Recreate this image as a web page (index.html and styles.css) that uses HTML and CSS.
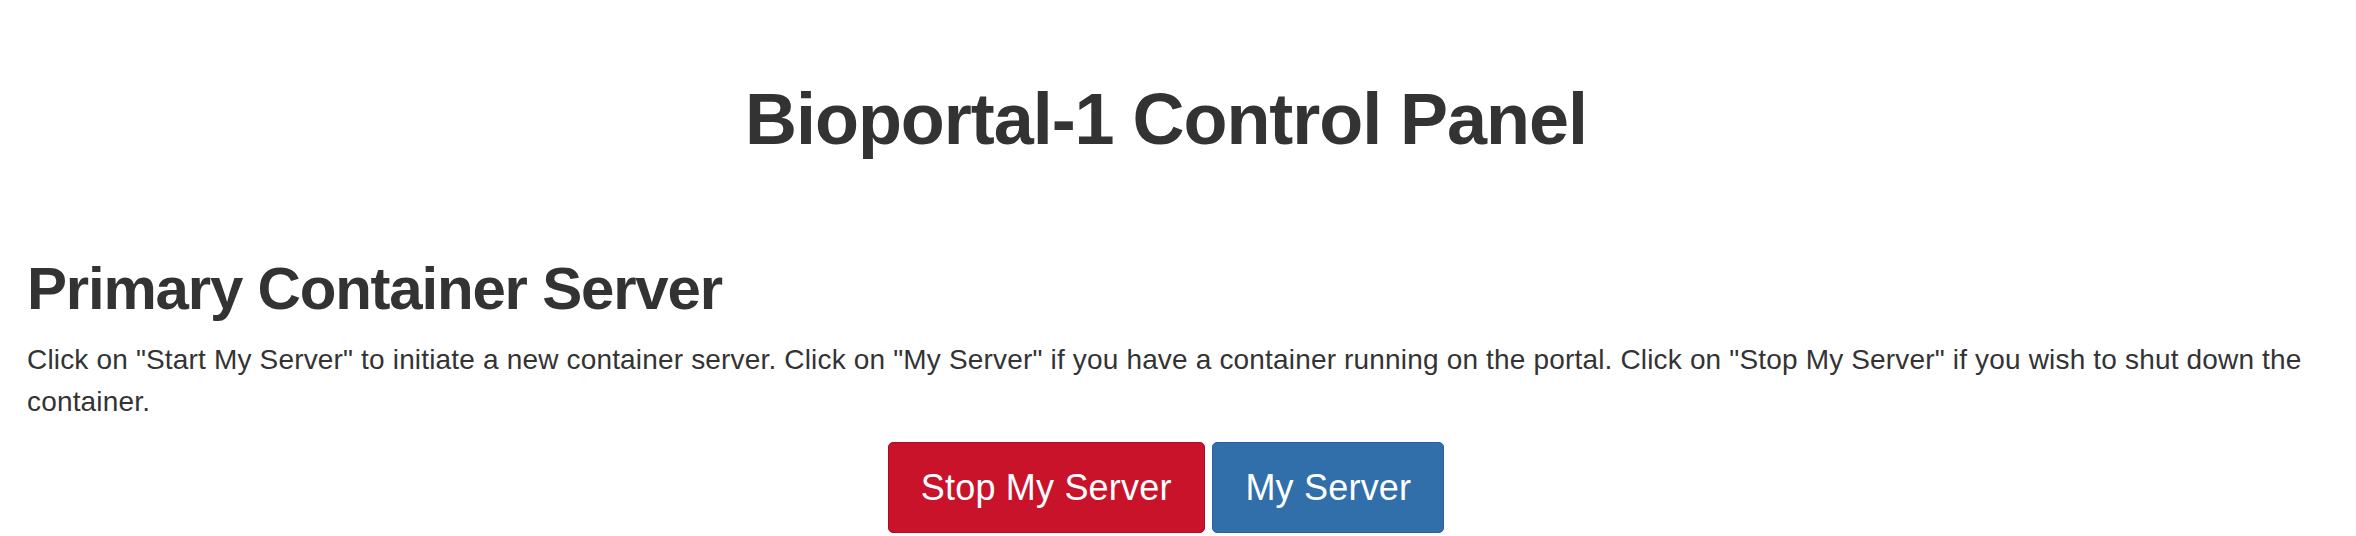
FILE: index.html
```html
<!DOCTYPE html>
<html lang="en">
<head>
<meta charset="utf-8">
<title>Bioportal-1 Control Panel</title>
<link rel="stylesheet" href="styles.css">
</head>
<body>
<div class="container">
  <h1 class="title">Bioportal-1 Control Panel</h1>
  <section class="section">
    <h2 class="section-title">Primary Container Server</h2>
    <p class="section-text">Click on "Start My Server" to initiate a new container server. Click on "My Server" if you have a container running on the portal. Click on "Stop My Server" if you wish to shut down the container.</p>
    <div class="actions">
      <a class="btn btn-danger" href="#">Stop My Server</a>
      <a class="btn btn-primary" href="#">My Server</a>
    </div>
  </section>
</div>
</body>
</html>
```

FILE: styles.css
```css
html, body {
  margin: 0;
  padding: 0;
  background: #ffffff;
}

body {
  font-family: "Liberation Sans", Arial, Helvetica, sans-serif;
  color: #333333;
  font-size: 28px;
  line-height: 41.6px;
}

.container {
  padding: 0 51px 0 27px;
}

.title {
  margin: 80px 0 0 0;
  font-size: 72px;
  line-height: 79.2px;
  font-weight: 700;
  letter-spacing: -1.05px;
  text-align: center;
}

.section {
  margin-top: 97px;
}

.section-title {
  margin: 0 0 17px 0;
  font-size: 60px;
  line-height: 66px;
  font-weight: 700;
  letter-spacing: -1.2px;
}

.section-text {
  margin: 0 0 20px 0;
  letter-spacing: 0.17px;
}

.actions {
  text-align: center;
  font-size: 28px;
  line-height: 41.6px;
}

.btn {
  display: inline-block;
  vertical-align: top;
  padding: 20px 32px;
  font-size: 36px;
  line-height: 49px;
  letter-spacing: 0.2px;
  color: #ffffff;
  text-decoration: none;
  border: 1px solid transparent;
  border-radius: 5px;
}

.btn-danger {
  background: #c9132a;
  border-color: #a81022;
}

.btn-primary {
  background: #316fab;
  border-color: #2a6097;
}
```
